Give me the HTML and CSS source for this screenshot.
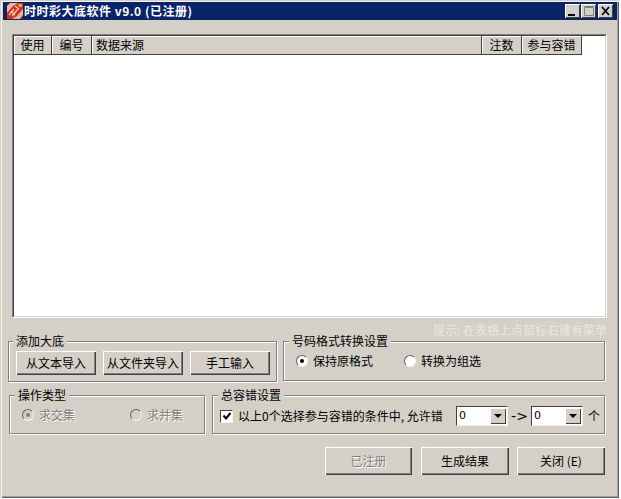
FILE: index.html
```html
<!DOCTYPE html>
<html lang="zh">
<head>
<meta charset="utf-8">
<title>时时彩大底软件</title>
<link rel="stylesheet" href="styles.css">
</head>
<body>
<div class="window">
  <div class="titlebar">
    <svg class="app-icon" width="16" height="16" viewBox="0 0 16 16">
      <rect width="16" height="16" fill="#e8b8a0"/>
      <path d="M0 16 L0 10 L6 3 L11 0 L16 0 L16 6 L10 13 L5 16 Z" fill="#d8301c"/>
      <path d="M2 12 L7 6 M5 13 L11 6 M8 3 L12 6 M4 8 L8 12" stroke="#f6d0b0" stroke-width="1.2" fill="none"/>
      <path d="M11 1 L15 1 L15 4 L12 4 Z" fill="#f2a050"/>
      <path d="M0 0 L3 0 L0 3 Z M13 16 L16 16 L16 12 Z" fill="#5a2030"/>
    </svg>
    <span class="title-text">时时彩大底软件 v9.0 (已注册)</span>
    <div class="title-buttons">
      <span class="cap-btn"><svg width="13" height="12" viewBox="0 0 13 12"><rect x="2" y="9" width="7" height="2" fill="#000"/></svg></span>
      <span class="cap-btn cap-max"><svg width="13" height="12" viewBox="0 0 13 12"><path d="M2.5 2.5h9v8h-9z M2.5 1.5h9" fill="none" stroke="#808080"/></svg></span>
      <span class="cap-btn cap-close"><svg width="13" height="12" viewBox="0 0 13 12"><path d="M3 2 L10 10 M10 2 L3 10" stroke="#000" stroke-width="1.7" fill="none"/></svg></span>
    </div>
  </div>
  <div class="content">
    <div class="list">
      <div class="list-inner">
        <div class="list-header">
          <div class="col col-use">使用</div>
          <div class="col col-no">编号</div>
          <div class="col col-src">数据来源</div>
          <div class="col col-count">注数</div>
          <div class="col col-tol">参与容错</div>
        </div>
      </div>
    </div>
    <div class="hint">提示: 在表格上点鼠标右键有菜单</div>
    <div class="row row-one">
      <div class="group group-add">
        <span class="legend">添加大底</span>
        <button class="btn btn-add">从文本导入</button>
        <button class="btn btn-add">从文件夹导入</button>
        <button class="btn btn-add">手工输入</button>
      </div>
      <div class="group group-format">
        <span class="legend legend-format">号码格式转换设置</span>
        <label class="opt opt-keep"><span class="radio checked"></span>保持原格式</label>
        <label class="opt opt-group"><span class="radio"></span>转换为组选</label>
      </div>
    </div>
    <div class="row row-two">
      <div class="group group-op">
        <span class="legend legend-op">操作类型</span>
        <label class="opt opt-disabled opt-inter"><span class="radio checked disabled"></span>求交集</label>
        <label class="opt opt-disabled"><span class="radio disabled"></span>求并集</label>
      </div>
      <div class="group group-tol">
        <span class="legend legend-tol">总容错设置</span>
        <span class="check"><svg width="10" height="10" viewBox="0 0 10 10"><path d="M1.5 4.5 L4 7.5 L8.5 2" stroke="#000" stroke-width="2" fill="none"/></svg></span>
        <span class="tol-text">以上0个选择参与容错的条件中, 允许错</span>
        <span class="combo"><span class="combo-value">0</span><span class="combo-arrow"><i class="tri"></i></span></span>
        <span class="arrow-text">-&gt;</span>
        <span class="combo"><span class="combo-value">0</span><span class="combo-arrow"><i class="tri"></i></span></span>
        <span class="unit">个</span>
      </div>
    </div>
    <div class="actions">
      <button class="btn btn-action btn-disabled">已注册</button>
      <button class="btn btn-action btn-make">生成结果</button>
      <button class="btn btn-action">关闭 (E)</button>
    </div>
  </div>
</div>
</body>
</html>
```
FILE: styles.css
```css
* { box-sizing: border-box; }
html, body { margin: 0; padding: 0; background: #fff; }
body {
  font-family: "Noto Sans CJK SC", "DejaVu Sans", sans-serif;
  font-size: 12px;
  line-height: 14px;
  color: #000;
}
.window {
  width: 619px;
  height: 498px;
  background: #d4d0c8;
  padding: 2px 1px 0 3px;
  box-shadow: inset 1px 1px 0 #d4d0c8, inset 2px 2px 0 #f4f3ef, inset -1px -1px 0 #606060, inset -2px -2px 0 #a0a0a0;
}
.titlebar {
  height: 18px;
  background: #0a246a;
  display: flex;
  align-items: center;
  padding: 0 4px 0 4px;
  width: 614px;
}
.app-icon { flex: none; margin-right: 1px; }
.title-text {
  color: #fff;
  font-weight: 700;
  font-size: 12px;
  letter-spacing: 0.5px;
  flex: 1;
}
.title-buttons { display: flex; gap: 1px; }
.cap-btn {
  width: 15px;
  height: 14px;
  background: #d4d0c8;
  box-shadow: inset 1px 1px 0 #fff, inset -1px -1px 0 #404040;
  display: flex;
  align-items: center;
  justify-content: center;
}
.cap-close { margin-left: 1px; }
.content { padding: 14px 0 0 5px; }
.list {
  width: 595px;
  height: 284px;
  margin-left: 4px;
  background: #fff;
  border: 1px solid;
  border-color: #808080 #fff #fff #808080;
}
.list-inner {
  height: 100%;
  border: 1px solid;
  border-color: #404040 #d4d0c8 #d4d0c8 #404040;
}
.list-header { display: flex; height: 19px; }
.col {
  background: #d4d0c8;
  border-right: 1px solid #404040;
  border-bottom: 1px solid #404040;
  box-shadow: inset 1px 1px 0 #fff;
  text-align: center;
  line-height: 18px;
}
.col-use { width: 38px; }
.col-no { width: 40px; }
.col-src { width: 390px; text-align: left; padding-left: 4px; }
.col-count { width: 40px; }
.col-tol { width: 60px; }
.hint {
  height: 23px;
  width: 599px;
  text-align: right;
  color: #e9e7e1;
  line-height: 24px;
}
.row { display: flex; gap: 6px; }
.group {
  position: relative;
  display: flex;
  align-items: center;
  border: 1px solid #808080;
  box-shadow: 1px 1px 0 #fff, inset 1px 1px 0 #fff;
}
.legend {
  position: absolute;
  top: -8px;
  left: 4px;
  padding: 0 3px;
  background: #d4d0c8;
  line-height: 14px;
}
.legend-format { left: 5px; }
.legend-op { left: 5px; }
.legend-tol { left: 5px; }
.group-add { width: 269px; height: 41px; padding: 3px 0 0 7px; gap: 7px; }
.group-format { width: 322px; height: 40px; padding: 0 0 0 12px; }
.row-two { margin: 13px 0 0 1px; gap: 7px; }
.group-op { width: 196px; height: 39px; padding: 0 0 0 12px; }
.group-tol { width: 393px; height: 39px; padding: 3px 0 0 7px; }
.btn {
  font: inherit;
  color: #000;
  background: #d4d0c8;
  border: 0;
  padding: 0;
  box-shadow: inset 1px 1px 0 #fff, inset -1px -1px 0 #404040, inset -2px -2px 0 #808080;
}
.btn-add { width: 80px; height: 24px; }
.opt { display: flex; align-items: center; gap: 5px; }
.opt-keep { width: 108px; }
.opt-inter { width: 108px; }
.opt-disabled { color: #808080; text-shadow: 1px 1px 0 #fff; }
.radio {
  width: 12px;
  height: 12px;
  border-radius: 50%;
  flex: none;
  background: #fff;
  border: 1px solid #606060;
  border-right-color: #f4f3ef;
  border-bottom-color: #f4f3ef;
  display: flex;
  align-items: center;
  justify-content: center;
}
.radio.checked::after {
  content: "";
  width: 4px;
  height: 4px;
  border-radius: 50%;
  background: #000;
}
.radio.disabled { background: #d4d0c8; }
.radio.disabled.checked::after { background: #808080; }
.check {
  width: 13px;
  height: 13px;
  flex: none;
  background: #fff;
  border: 1px solid;
  border-color: #404040 #f4f3ef #f4f3ef #404040;
  display: flex;
  align-items: center;
  justify-content: center;
  margin-right: 5px;
}
.tol-text { width: 218px; white-space: nowrap; }
.combo {
  width: 52px;
  height: 20px;
  flex: none;
  display: flex;
  background: #fff;
  border: 1px solid;
  border-color: #404040 #f4f3ef #f4f3ef #404040;
  padding: 1px;
}
.combo-value { flex: 1; line-height: 15px; padding-left: 1px; font-size: 11px; font-family: "DejaVu Sans", sans-serif; }
.combo-arrow {
  width: 16px;
  background: #d4d0c8;
  box-shadow: inset 1px 1px 0 #fff, inset -1px -1px 0 #404040;
  display: flex;
  align-items: center;
  justify-content: center;
}
.tri {
  width: 0;
  height: 0;
  border-left: 4px solid transparent;
  border-right: 4px solid transparent;
  border-top: 4px solid #000;
}
.arrow-text { width: 23px; text-align: center; font-family: "DejaVu Sans", sans-serif; font-size: 14px; white-space: nowrap; }
.unit { margin-left: 5px; }
.actions {
  display: flex;
  justify-content: flex-end;
  gap: 8px;
  margin-top: 13px;
  width: 597px;
}
.btn-action { width: 88px; height: 28px; }
.btn-make { margin-left: 1px; }
.btn-disabled { width: 87px; color: #808080; text-shadow: 1px 1px 0 #fff; }
```
